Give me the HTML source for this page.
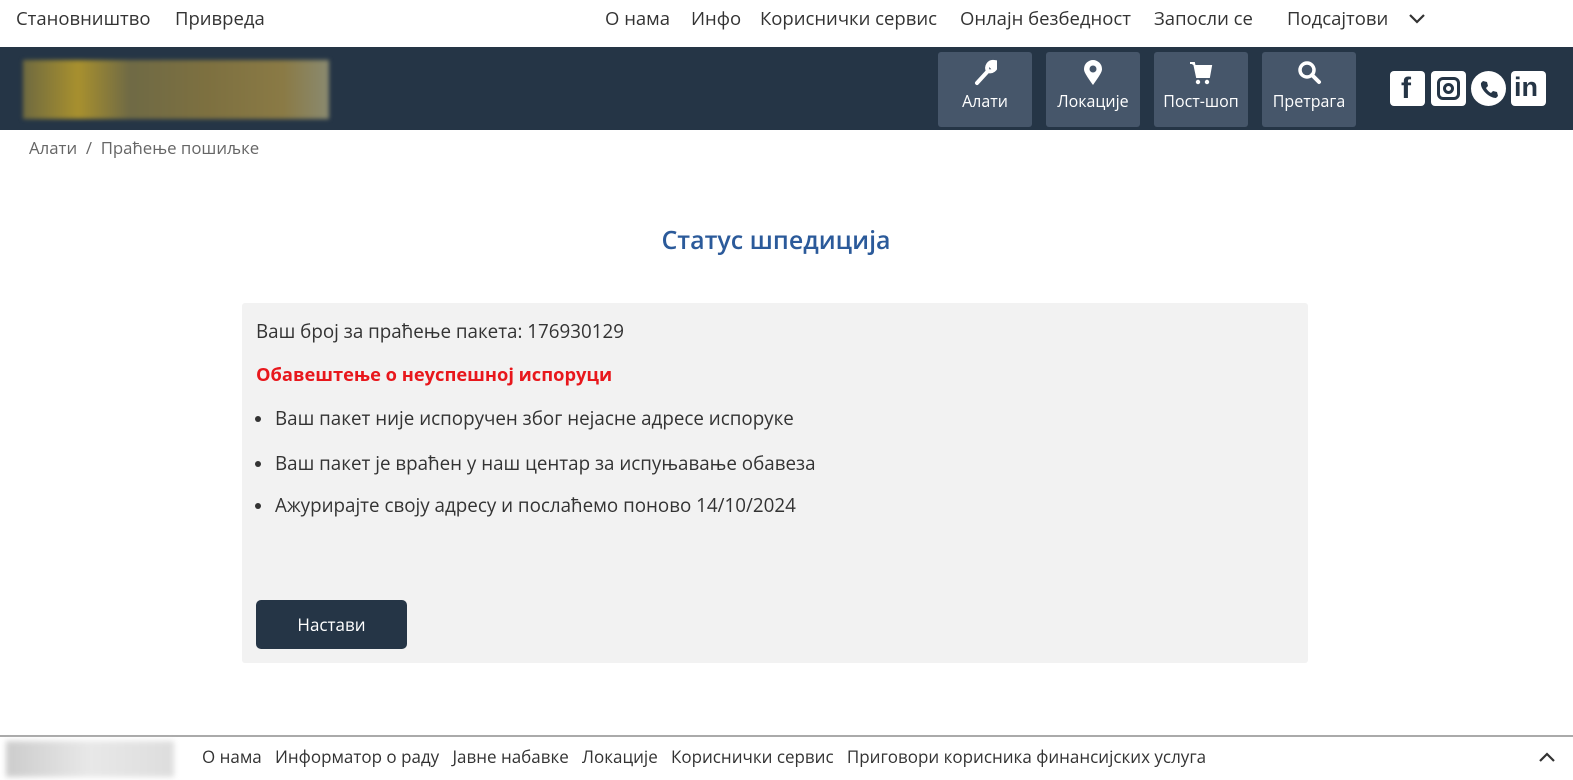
<!DOCTYPE html>
<html><head><meta charset="utf-8"><style>
*{margin:0;padding:0;box-sizing:border-box}
body{width:1573px;height:780px;overflow:hidden;background:#fff;font-family:"Open Sans","DejaVu Sans","Liberation Sans",sans-serif;color:#333;position:relative}
.a{position:absolute;white-space:nowrap}
.top{font-size:18.5px;color:#333;top:6px}
.hdr{position:absolute;left:0;top:47px;width:1573px;height:83px;background:#253546}
.logo{position:absolute;left:23px;top:13px;width:306px;height:59px;background:linear-gradient(90deg,#6f6a40 0%,#a8902e 18%,#6f6a45 35%,#7d7040 60%,#8a7a45 85%,#8a8a70 100%);filter:blur(2px)}
.btn{position:absolute;top:5px;width:94px;height:75px;background:#46566a;border-radius:3px;color:#fff;font-size:16px;text-align:center}
.btn svg{display:block;margin:7px auto 3px;}
.soc{position:absolute;top:24px;width:35px;height:35px;background:#fff;border-radius:4px}
.panel{position:absolute;left:242px;top:303px;width:1066px;height:360px;background:#f2f2f2;border-radius:3px}
.t{font-size:18.8px;color:#333}
.b{position:absolute;left:13px;width:6px;height:6px;border-radius:50%;background:#333}
</style></head><body>
<div class="a top" style="left:16px">Становништво</div>
<div class="a top" style="left:175px">Привреда</div>
<div class="a top" style="left:605px">О нама</div>
<div class="a top" style="left:691px">Инфо</div>
<div class="a top" style="left:760px">Кориснички сервис</div>
<div class="a top" style="left:960px">Онлајн безбедност</div>
<div class="a top" style="left:1154px">Запосли се</div>
<div class="a top" style="left:1287px">Подсајтови</div>
<svg class="a" style="left:1408px;top:12px" width="18" height="14"><path d="M2 3l7 7 7-7" stroke="#333" stroke-width="2.2" fill="none"/></svg>
<div class="hdr">
<div class="logo"></div>
<div class="btn" style="left:938px"><svg width="24" height="28" viewBox="0 0 24 28"><path d="M4 24l11-12M15 12a6 6 0 0 1 6-9l-3 4 2 2 3-3a6 6 0 0 1-8 6" stroke="#fff" stroke-width="4" fill="none" stroke-linecap="round"/></svg>Алати</div>
<div class="btn" style="left:1046px"><svg width="24" height="28" viewBox="0 0 24 28"><path d="M12 26C5 16 3 13 3 10a9 9 0 0 1 18 0c0 3-2 6-9 16z" fill="#fff"/><circle cx="12" cy="10" r="3.5" fill="#46566a"/></svg>Локације</div>
<div class="btn" style="left:1154px"><svg width="26" height="28" viewBox="0 0 26 28"><path d="M2 4h4l3 14h12l2-11H7" fill="#fff" stroke="#fff" stroke-width="2"/><circle cx="10" cy="23" r="2.2" fill="#fff"/><circle cx="19" cy="23" r="2.2" fill="#fff"/></svg>Пост-шоп</div>
<div class="btn" style="left:1262px"><svg width="26" height="28" viewBox="0 0 26 28"><circle cx="11" cy="11" r="7" stroke="#fff" stroke-width="3.5" fill="none"/><path d="M16 16l7 7" stroke="#fff" stroke-width="4" stroke-linecap="round"/></svg>Претрага</div>
<div class="soc" style="left:1390px"><span class="a" style="left:11px;top:1px;font:bold 30px 'Liberation Sans';color:#253546">f</span></div>
<div class="soc" style="left:1431px"><div class="a" style="left:6px;top:6px;width:23px;height:23px;border:3px solid #253546;border-radius:6px"></div><div class="a" style="left:12px;top:12px;width:11px;height:11px;border:3px solid #253546;border-radius:50%"></div></div>
<div class="soc" style="left:1471px;border-radius:50%"><svg class="a" style="left:8px;top:8px" width="20" height="20" viewBox="0 0 20 20"><path d="M4 2l4 1 1 4-2 2c1 2 3 4 5 5l2-2 4 1 1 4-2 2C10 19 1 10 2 4z" fill="#253546"/></svg></div>
<div class="soc" style="left:1511px"><span class="a" style="left:3px;top:1px;font:bold 27px 'Liberation Sans';color:#253546">in</span></div>
</div>
<div class="a" style="left:29px;top:136px;font-size:16.8px;color:#666">Алати &nbsp;/&nbsp; Праћење пошиљке</div>
<div class="a" style="left:0;width:1552px;text-align:center;top:223px;font-size:25px;color:#2b5a9a;font-weight:600">Статус шпедиција</div>
<div class="panel">
<div class="a t" style="left:14px;top:15px">Ваш број за праћење пакета: 176930129</div>
<div class="a" style="left:14px;top:59px;font-size:18.3px;font-weight:bold;color:#e8171c">Обавештење о неуспешној испоруци</div>
<div class="b" style="top:113px"></div><div class="a t" style="left:33px;top:102px">Ваш пакет није испоручен због нејасне адресе испоруке</div>
<div class="b" style="top:158px"></div><div class="a t" style="left:33px;top:147px">Ваш пакет је враћен у наш центар за испуњавање обавеза</div>
<div class="b" style="top:200px"></div><div class="a t" style="left:33px;top:189px">Ажурирајте своју адресу и послаћемо поново 14/10/2024</div>
<div class="a" style="left:14px;top:297px;width:151px;height:49px;background:#253546;border-radius:5px;color:#fff;font-size:17px;text-align:center;line-height:49px">Настави</div>
</div>
<div class="a" style="left:0;top:735px;width:1573px;height:2px;background:#aaa"></div>
<div class="a" style="left:6px;top:741px;width:168px;height:36px;background:linear-gradient(90deg,#ccc,#e8e8e8,#ddd);filter:blur(3px)"></div>
<div class="a" style="left:202px;top:745px;font-size:17px;color:#333">О нама&nbsp;&nbsp; Информатор о раду&nbsp;&nbsp; Јавне набавке&nbsp;&nbsp; Локације&nbsp;&nbsp; Кориснички сервис&nbsp;&nbsp; Приговори корисника финансијских услуга</div>
<svg class="a" style="left:1538px;top:750px" width="18" height="14"><path d="M2 11l7-7 7 7" stroke="#333" stroke-width="2.2" fill="none"/></svg>
</body></html>
